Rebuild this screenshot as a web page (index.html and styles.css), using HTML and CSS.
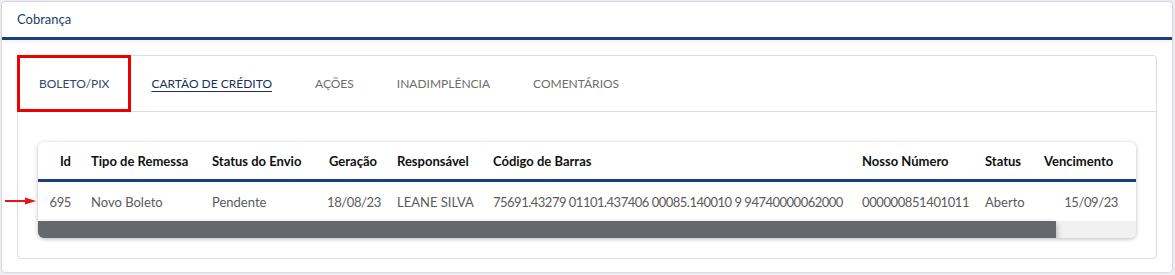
FILE: index.html
```html
<!DOCTYPE html>
<html lang="pt-BR">
<head>
    <meta charset="UTF-8">
    <title>Cobrança</title>
    <link rel="stylesheet" href="styles.css">
</head>
<body>
    <div class="card">
        <div class="card-header">Cobrança</div>
        <div class="card-body">
            <div class="panel">
                <ul class="tabs">
                    <li class="tab active">BOLETO/PIX</li>
                    <li class="tab link">CARTÃO DE CRÉDITO</li>
                    <li class="tab">AÇÕES</li>
                    <li class="tab">INADIMPLÊNCIA</li>
                    <li class="tab">COMENTÁRIOS</li>
                </ul>
                <div class="panel-body">
                    <svg class="arrow" width="32" height="10" viewBox="0 0 32 10">
                        <line x1="0" y1="5" x2="22" y2="5" stroke="#e8141b" stroke-width="2"/>
                        <polygon points="20,1.5 31,5 20,8.5" fill="#e8141b"/>
                    </svg>
                    <div class="grid">
                        <table>
                            <colgroup>
                                <col style="width:43px">
                                <col style="width:121px">
                                <col style="width:115px">
                                <col style="width:70px">
                                <col style="width:96px">
                                <col style="width:369px">
                                <col style="width:123px">
                                <col style="width:59px">
                                <col>
                            </colgroup>
                            <thead>
                                <tr>
                                    <th class="num">Id</th>
                                    <th>Tipo de Remessa</th>
                                    <th>Status do Envio</th>
                                    <th class="num">Geração</th>
                                    <th>Responsável</th>
                                    <th>Código de Barras</th>
                                    <th>Nosso Número</th>
                                    <th>Status</th>
                                    <th>Vencimento</th>
                                </tr>
                            </thead>
                            <tbody>
                                <tr>
                                    <td class="num digits">695</td>
                                    <td>Novo Boleto</td>
                                    <td>Pendente</td>
                                    <td class="num digits">18/08/23</td>
                                    <td>LEANE SILVA</td>
                                    <td class="digits barcode">75691.43279 01101.437406 00085.140010 9 94740000062000</td>
                                    <td class="digits">000000851401011</td>
                                    <td>Aberto</td>
                                    <td class="num digits end">15/09/23</td>
                                </tr>
                            </tbody>
                        </table>
                        <div class="scrollbar"><div class="thumb"></div></div>
                    </div>
                </div>
            </div>
        </div>
    </div>
</body>
</html>
```

FILE: styles.css
```css
body {
    margin: 0;
    padding: 1px 2px 0 1px;
    background-color: #ececf2;
    font-family: Lato, "Open Sans", sans-serif;
    font-size: 13px;
}
.card {
    background-color: #fff;
    border: 1px solid #d9d9e2;
    border-radius: 4px;
    height: 272px;
    box-sizing: border-box;
}
.card-header {
    height: 35px;
    line-height: 34px;
    padding-left: 15px;
    color: #213b6b;
    border-bottom: 3px solid #1b3e7c;
    box-shadow: 0 2px 3px rgba(0, 0, 0, 0.06);
}
.card-body {
    padding: 15px 15px 10px 15px;
}
.panel {
    border: 1px solid #dedede;
    border-radius: 4px;
}
.tabs {
    display: flex;
    margin: 0;
    padding: 0;
    list-style: none;
    border-bottom: 1px solid #dedede;
    height: 55px;
}
.tab {
    padding: 0 21.5px;
    line-height: 55px;
    color: #6d6d6d;
    font-size: 12px;
    white-space: nowrap;
}
.tab.active {
    color: #33466f;
    border: 3px solid #ee0000;
    padding: 0 19px;
    line-height: 51px;
    margin: -1px 0 0 -1px;
    height: 51px;
}
.tab.link {
    color: #1b2f5e;
    text-decoration: underline;
    text-underline-offset: 3px;
    padding-left: 20px;
}
.panel-body {
    position: relative;
    padding: 30px 20px 20px 20px;
}
.arrow {
    position: absolute;
    left: -13px;
    top: 84px;
}
.grid {
    border-radius: 6px;
    overflow: hidden;
    box-shadow: 0 1px 4px rgba(0, 0, 0, 0.28);
}
table {
    width: 100%;
    table-layout: fixed;
    border-collapse: collapse;
}
th, td {
    padding: 0 10px;
    text-align: left;
    white-space: nowrap;
}
th {
    height: 37px;
    color: #111;
    font-weight: bold;
    border-bottom: 3px solid #1b3e7c;
}
td {
    height: 39px;
    color: #5b5b5b;
}
th.num, td.num {
    text-align: right;
}
td.digits {
    letter-spacing: -0.4px;
}
td.barcode {
    letter-spacing: -0.5px;
}
td.end {
    padding-right: 18px;
}
.scrollbar {
    height: 17px;
    background-color: #f1f1f1;
}
.thumb {
    width: 1018px;
    height: 100%;
    background-color: #65696d;
    box-shadow: 0 3px 6px rgba(0, 0, 0, 0.35);
}
```
